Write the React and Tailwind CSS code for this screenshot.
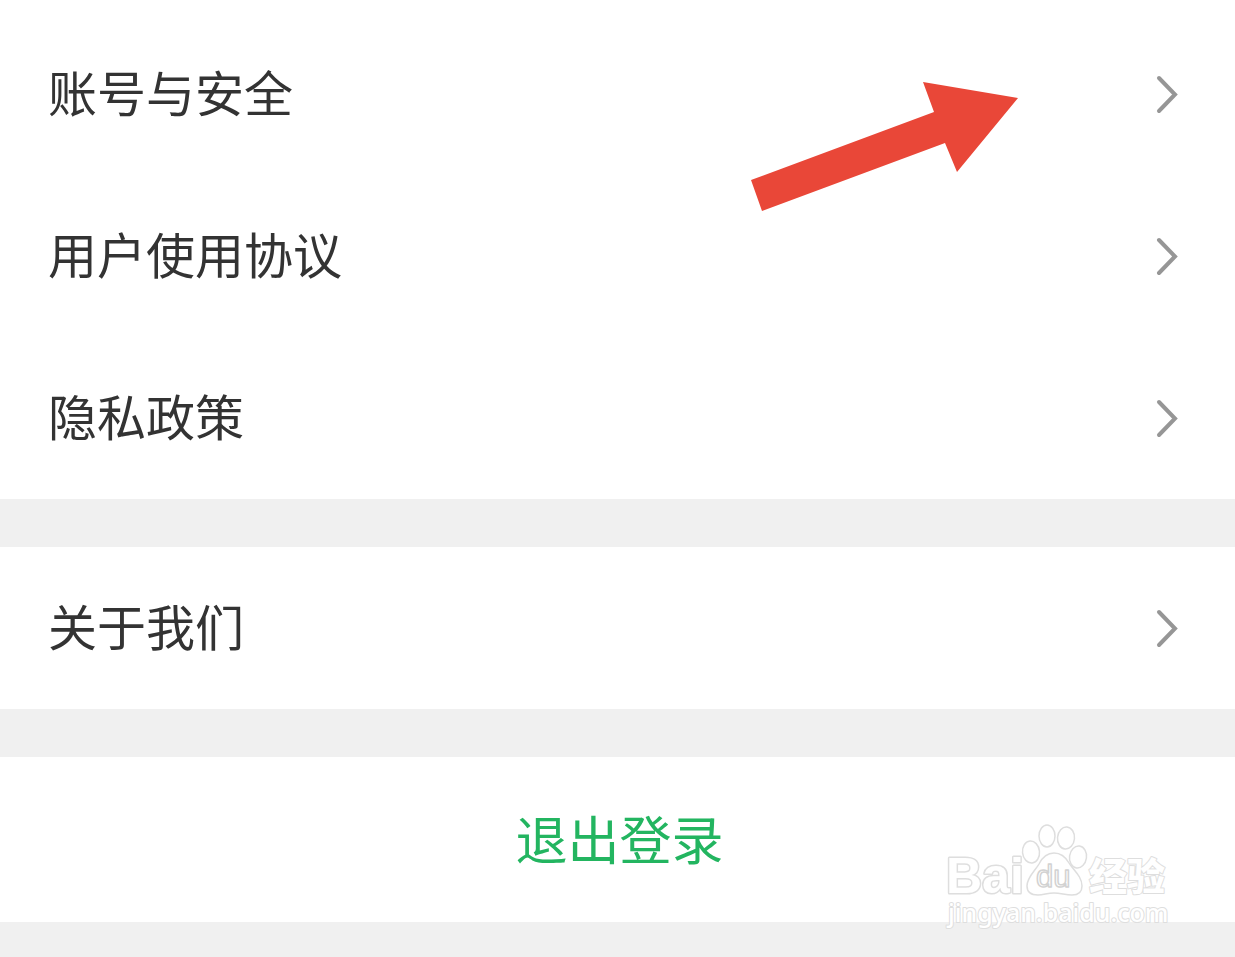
function Chevron() {
  return (
    <svg className="h-10 w-7 shrink-0" viewBox="0 0 28 40" fill="none" aria-hidden="true">
      <path d="M6 4 L22 20.5 L6 37" stroke="#969696" strokeWidth="4" strokeLinecap="round" strokeLinejoin="miter" />
    </svg>
  );
}

function Row({ label }) {
  return (
    <li>
      <a href="#" className="flex h-[162px] items-center justify-between bg-white pr-[54px] pl-12 text-[49px] leading-[72px] text-[#333333]">
        <span className="pb-1.5">{label}</span>
        <Chevron />
      </a>
    </li>
  );
}

function Arrow() {
  return (
    <svg className="pointer-events-none absolute top-20 right-[215px] h-[134px] w-[270px]" viewBox="0 0 270 134" aria-hidden="true">
      <path d="M1 100 L184 32 L173 2 L268 18 L207 92 L195 63 L12 131 Z" fill="#e94738" />
    </svg>
  );
}

function Watermark() {
  return (
    <svg
      className="pointer-events-none absolute right-[57px] bottom-[23px] h-[114px] w-[236px]"
      viewBox="0 0 236 114"
      fill="#ffffff"
      stroke="#dedede"
      strokeWidth="1.5"
      strokeLinejoin="round"
      role="img"
      aria-label="Baidu 经验 jingyan.baidu.com"
    >
      <text x="4" y="73" fontSize="50" strokeWidth="3" paintOrder="stroke" className="font-['Liberation_Sans',sans-serif] font-bold">Bai</text>
      <ellipse cx="89" cy="32" rx="8.5" ry="11" transform="rotate(-6 89 32)" />
      <ellipse cx="105" cy="16" rx="8" ry="11" />
      <ellipse cx="124" cy="18" rx="8.5" ry="11" transform="rotate(5 124 18)" />
      <ellipse cx="136" cy="37" rx="8.5" ry="11" transform="rotate(8 136 37)" />
      <path d="M112 33 C118 33 123 36 127 43 C131 50 140 56 140 66 C140 72 136 75 130 75 C123 75 119 73 112 73 C105 73 102 75 96 75 C89 75 85 72 85 66 C85 57 93 51 97 44 C101 36 106 33 112 33 Z" />
      <text x="94" y="67" fontSize="31" stroke="#d2d2d2" className="font-['Liberation_Sans',sans-serif]">du</text>
      <text x="147" y="70" fontSize="38" strokeWidth="2" paintOrder="stroke" className="font-['Noto_Sans_CJK_SC',sans-serif] font-black">经验</text>
      <text x="6" y="102" fontSize="25" strokeWidth="2" paintOrder="stroke" className="font-['Noto_Sans',sans-serif] font-medium">jingyan.baidu.com</text>
    </svg>
  );
}

export default function App() {
  return (
    <main className="relative min-h-screen bg-[#f0f0f0] font-['Noto_Sans_CJK_SC',sans-serif]">
      <ul className="bg-white pt-[13px]">
        <Row label="账号与安全" />
        <Row label="用户使用协议" />
        <Row label="隐私政策" />
      </ul>
      <ul className="my-12">
        <Row label="关于我们" />
      </ul>
      <button type="button" className="block h-[165px] w-full bg-white pb-1 pl-1 text-[52px] leading-[76px] text-[#23b560]">
        退出登录
      </button>
      <Arrow />
      <Watermark />
    </main>
  );
}
